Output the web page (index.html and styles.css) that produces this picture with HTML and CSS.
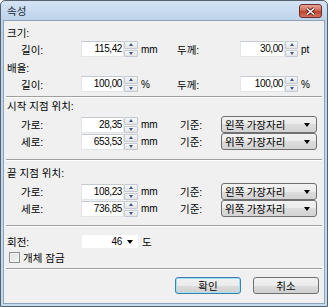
FILE: index.html
```html
<html>
    <head>
        <link rel="stylesheet" href="styles.css">
    </head>
    <body>
        <div class="window">
            <div class="titlebar">
                <span class="title">속성</span>
                <span class="close">
                    <svg width="11" height="9" viewBox="0 0 11 9">
                        <path d="M2 1.5 L9 7.5 M9 1.5 L2 7.5" stroke="#4a1a1a" stroke-width="3.2" />
                        <path d="M2 1.5 L9 7.5 M9 1.5 L2 7.5" stroke="#fff" stroke-width="1.6" />
                    </svg>
                </span>
            </div>
            <div class="client">
                <div class="head h-first">크기:</div>
                <div class="row">
                    <span class="lbl">길이:</span>
                    <span class="num n1">115,42</span>
                    <span class="spin"><i class="up"></i><i class="down"></i></span>
                    <span class="unit u-size">mm</span>
                    <span class="lbl2 l-size">두께:</span>
                    <span class="num n2">30,00</span>
                    <span class="spin"><i class="up"></i><i class="down"></i></span>
                    <span class="unit">pt</span>
                </div>
                <div class="head h-scale">배율:</div>
                <div class="row">
                    <span class="lbl">길이:</span>
                    <span class="num n1">100,00</span>
                    <span class="spin"><i class="up"></i><i class="down"></i></span>
                    <span class="unit u-size">%</span>
                    <span class="lbl2 l-size">두께:</span>
                    <span class="num n2">100,00</span>
                    <span class="spin"><i class="up"></i><i class="down"></i></span>
                    <span class="unit">%</span>
                </div>
                <div class="sep s1"></div>

                <div class="head h-start">시작 지점 위치:</div>
                <div class="row row-pos">
                    <span class="lbl">가로:</span>
                    <span class="num n1">28,35</span>
                    <span class="spin"><i class="up"></i><i class="down"></i></span>
                    <span class="unit u-pos">mm</span>
                    <span class="lbl2 l-pos">기준:</span>
                    <span class="select">왼쪽 가장자리<b class="arrow"></b></span>
                </div>
                <div class="row row-pos">
                    <span class="lbl">세로:</span>
                    <span class="num n1">653,53</span>
                    <span class="spin"><i class="up"></i><i class="down"></i></span>
                    <span class="unit u-pos">mm</span>
                    <span class="lbl2 l-pos">기준:</span>
                    <span class="select">위쪽 가장자리<b class="arrow"></b></span>
                </div>
                <div class="sep s2"></div>

                <div class="head h-end">끝 지점 위치:</div>
                <div class="row row-pos">
                    <span class="lbl">가로:</span>
                    <span class="num n1">108,23</span>
                    <span class="spin"><i class="up"></i><i class="down"></i></span>
                    <span class="unit u-pos">mm</span>
                    <span class="lbl2 l-pos">기준:</span>
                    <span class="select">왼쪽 가장자리<b class="arrow"></b></span>
                </div>
                <div class="row row-pos">
                    <span class="lbl">세로:</span>
                    <span class="num n1">736,85</span>
                    <span class="spin"><i class="up"></i><i class="down"></i></span>
                    <span class="unit u-pos">mm</span>
                    <span class="lbl2 l-pos">기준:</span>
                    <span class="select">위쪽 가장자리<b class="arrow"></b></span>
                </div>
                <div class="sep s3"></div>

                <div class="rotate">
                    <span class="rot-lbl">회전:</span>
                    <span class="combo">46<b class="arrow"></b></span>
                    <span class="unit">도</span>
                </div>
                <label class="check"><span class="box"></span>개체 잠금</label>
                <div class="sep s4"></div>

                <div class="buttons">
                    <span class="btn default">확인</span>
                    <span class="btn">취소</span>
                </div>
            </div>
        </div>
    </body>
</html>
```

FILE: styles.css
```css
* { box-sizing: border-box; }

body {
    margin: 0;
    font-family: "Liberation Sans", "Noto Sans CJK KR", sans-serif;
    font-size: 10.5px;
    color: #000;
    background: #fff;
}

.window {
    width: 328px;
    height: 307px;
    border: 1px solid #56606e;
    border-radius: 5px 5px 0 0;
    background: linear-gradient(#d3e3f4, #bcd3ea 20px, #c2dbef);
    padding: 0 2px 2px;
    display: flex;
    flex-direction: column;
}

.titlebar {
    height: 19px;
    display: flex;
    align-items: center;
    justify-content: space-between;
    padding: 0 3px 0 4px;
}

.title {
    font-family: "Noto Sans CJK KR", sans-serif;
    font-size: 10.5px;
    color: #1e2a3a;
}

.close {
    width: 23px;
    height: 14px;
    margin-top: 1px;
    border: 1px solid #6b2d2a;
    border-radius: 3px;
    background: linear-gradient(#e8a596, #d06a58 45%, #c0432f 55%, #d6735f);
    display: grid;
    place-items: center;
}

.close svg { display: block; }

.client {
    flex: 1;
    border: 1px solid #8fa2b8;
    background: #f0f0f0;
    padding-top: 5px;
}

.head {
    padding-left: 3px;
    display: flex;
    align-items: flex-end;
}
.h-first { height: 15px; padding-bottom: 1px; }
.h-scale { height: 19px; padding-bottom: 1px; }
.h-start { height: 18px; padding-bottom: 3px; }
.h-end { height: 22px; padding-bottom: 3px; }

.row {
    height: 16px;
    display: flex;
    align-items: stretch;
    padding-left: 17px;
}
.row-pos { height: 17px; }

.lbl {
    width: 60px;
    display: flex;
    align-items: center;
}

.lbl2 {
    display: flex;
    align-items: center;
}
.l-size { width: 63px; }
.l-pos { width: 41px; }

.num {
    background: #fff;
    border: 1px solid #e2e6eb;
    border-top-color: #c5cad2;
    text-align: right;
    padding-right: 1px;
    font-size: 10px;
    letter-spacing: -0.4px;
    line-height: 13px;
}
.row-pos .num { margin: 1px 0 0; }
.n1 { width: 43px; }
.n2 { width: 45px; }

.spin {
    width: 14px;
    display: flex;
    flex-direction: column;
    gap: 1px;
}
.row-pos .spin { margin-top: 1px; }
.n2 + .spin { width: 13px; }

.spin i {
    flex: 1;
    border: 1px solid #c3c9d1;
    border-radius: 1px;
    background: linear-gradient(#f7f7f7, #e4e4e4);
    display: grid;
    place-items: center;
}
.spin i::after {
    content: "";
    border-left: 2.5px solid transparent;
    border-right: 2.5px solid transparent;
}
.spin .up::after { border-bottom: 3px solid #3a5689; }
.spin .down::after { border-top: 3px solid #3a5689; }

.unit {
    padding-left: 3px;
    display: flex;
    align-items: center;
    font-size: 10px;
}
.u-size { width: 39px; }
.u-pos { width: 42px; }
.rotate .unit { font-size: 10.5px; }

.select {
    width: 96px;
    border: 1px solid #707070;
    border-radius: 3px;
    background: linear-gradient(#f2f2f2, #ebebeb 50%, #dddddd 50%, #d3d3d3);
    display: flex;
    align-items: center;
    justify-content: space-between;
    padding: 0 6px 0 3px;
    font-family: "Noto Sans CJK KR", sans-serif;
}

.arrow {
    width: 0;
    height: 0;
    border-left: 3.5px solid transparent;
    border-right: 3.5px solid transparent;
    border-top: 4px solid #000;
}

.sep {
    border-top: 1px solid #a0a0a0;
    border-bottom: 1px solid #fff;
    margin: 0 2px;
}
.s1 { margin-top: 4px; }
.s2 { margin-top: 9px; }
.s3 { margin-top: 8px; }
.s4 { margin-top: 3px; }

.rotate {
    height: 15px;
    margin-top: 7px;
    display: flex;
    padding-left: 3px;
}
.rot-lbl {
    width: 74px;
    display: flex;
    align-items: center;
}
.combo {
    width: 58px;
    background: #fff;
    border: 1px solid #eef0f3;
    display: flex;
    align-items: center;
    justify-content: flex-end;
    gap: 5px;
    padding-right: 5px;
    font-size: 10px;
    letter-spacing: -0.3px;
}

.check {
    height: 16px;
    display: flex;
    align-items: center;
    gap: 3px;
    padding-left: 5px;
}
.check .box {
    width: 11px;
    height: 11px;
    border: 1px solid #8e8f8f;
    background: linear-gradient(135deg, #dcdcdc, #f8f8f8);
    box-shadow: inset 0 0 0 1px #f4f4f4;
}

.buttons {
    display: flex;
    justify-content: flex-end;
    gap: 12px;
    margin-top: 7px;
    padding-right: 5px;
}

.btn {
    width: 66px;
    height: 17px;
    border: 1px solid #707070;
    border-radius: 3px;
    background: linear-gradient(#f2f2f2, #ebebeb 50%, #dddddd 50%, #cfcfcf);
    display: grid;
    place-items: center;
    font-family: "Noto Sans CJK KR", sans-serif;
}
.btn.default {
    border-color: #3c7fb1;
    box-shadow: inset 0 0 0 1px #9ee2f7;
}
```
